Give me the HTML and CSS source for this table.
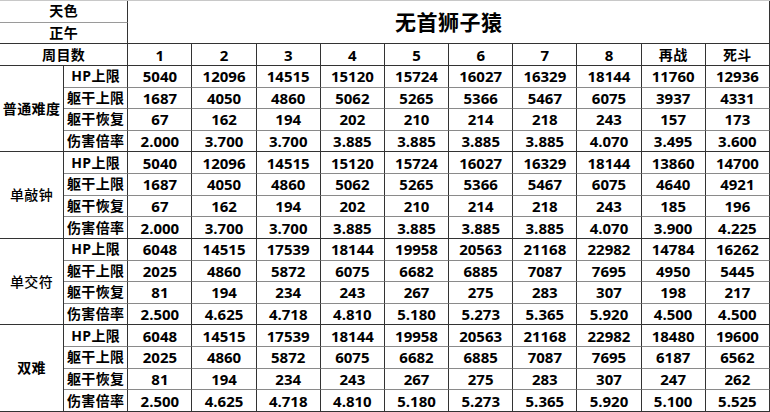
FILE: index.html
```html
<!DOCTYPE html>
<html lang="zh">
<head>
<meta charset="utf-8">
<link rel="stylesheet" href="styles.css">
</head>
<body>
<table class="sheet">
<colgroup>
<col><col><col><col><col><col><col><col><col><col><col><col>
</colgroup>
<tbody>
<tr class="g2"><td colspan="2" class="lbl">天色</td><td colspan="10" rowspan="2" class="title">无首狮子猿</td></tr>
<tr><td colspan="2" class="lbl">正午</td></tr>
<tr><td colspan="2" class="lbl">周目数</td><td>1</td><td>2</td><td>3</td><td>4</td><td>5</td><td>6</td><td>7</td><td>8</td><td class="lbl">再战</td><td class="lbl">死斗</td></tr>

<tr class="g"><td rowspan="4" class="grp">普通难度</td><td class="lbl">HP上限</td><td>5040</td><td>12096</td><td>14515</td><td>15120</td><td>15724</td><td>16027</td><td>16329</td><td>18144</td><td>11760</td><td>12936</td></tr>
<tr class="g"><td class="lbl">躯干上限</td><td>1687</td><td>4050</td><td>4860</td><td>5062</td><td>5265</td><td>5366</td><td>5467</td><td>6075</td><td>3937</td><td>4331</td></tr>
<tr class="g"><td class="lbl">躯干恢复</td><td>67</td><td>162</td><td>194</td><td>202</td><td>210</td><td>214</td><td>218</td><td>243</td><td>157</td><td>173</td></tr>
<tr><td class="lbl">伤害倍率</td><td>2.000</td><td>3.700</td><td>3.700</td><td>3.885</td><td>3.885</td><td>3.885</td><td>3.885</td><td>4.070</td><td>3.495</td><td>3.600</td></tr>

<tr class="g"><td rowspan="4" class="grp light">单敲钟</td><td class="lbl">HP上限</td><td>5040</td><td>12096</td><td>14515</td><td>15120</td><td>15724</td><td>16027</td><td>16329</td><td>18144</td><td>13860</td><td>14700</td></tr>
<tr class="g"><td class="lbl">躯干上限</td><td>1687</td><td>4050</td><td>4860</td><td>5062</td><td>5265</td><td>5366</td><td>5467</td><td>6075</td><td>4640</td><td>4921</td></tr>
<tr class="g"><td class="lbl">躯干恢复</td><td>67</td><td>162</td><td>194</td><td>202</td><td>210</td><td>214</td><td>218</td><td>243</td><td>185</td><td>196</td></tr>
<tr><td class="lbl">伤害倍率</td><td>2.000</td><td>3.700</td><td>3.700</td><td>3.885</td><td>3.885</td><td>3.885</td><td>3.885</td><td>4.070</td><td>3.900</td><td>4.225</td></tr>

<tr class="g"><td rowspan="4" class="grp light">单交符</td><td class="lbl">HP上限</td><td>6048</td><td>14515</td><td>17539</td><td>18144</td><td>19958</td><td>20563</td><td>21168</td><td>22982</td><td>14784</td><td>16262</td></tr>
<tr class="g"><td class="lbl">躯干上限</td><td>2025</td><td>4860</td><td>5872</td><td>6075</td><td>6682</td><td>6885</td><td>7087</td><td>7695</td><td>4950</td><td>5445</td></tr>
<tr class="g"><td class="lbl">躯干恢复</td><td>81</td><td>194</td><td>234</td><td>243</td><td>267</td><td>275</td><td>283</td><td>307</td><td>198</td><td>217</td></tr>
<tr><td class="lbl">伤害倍率</td><td>2.500</td><td>4.625</td><td>4.718</td><td>4.810</td><td>5.180</td><td>5.273</td><td>5.365</td><td>5.920</td><td>4.500</td><td>4.500</td></tr>

<tr class="g"><td rowspan="4" class="grp">双难</td><td class="lbl">HP上限</td><td>6048</td><td>14515</td><td>17539</td><td>18144</td><td>19958</td><td>20563</td><td>21168</td><td>22982</td><td>18480</td><td>19600</td></tr>
<tr class="g"><td class="lbl">躯干上限</td><td>2025</td><td>4860</td><td>5872</td><td>6075</td><td>6682</td><td>6885</td><td>7087</td><td>7695</td><td>6187</td><td>6562</td></tr>
<tr class="g"><td class="lbl">躯干恢复</td><td>81</td><td>194</td><td>234</td><td>243</td><td>267</td><td>275</td><td>283</td><td>307</td><td>247</td><td>262</td></tr>
<tr><td class="lbl">伤害倍率</td><td>2.500</td><td>4.625</td><td>4.718</td><td>4.810</td><td>5.180</td><td>5.273</td><td>5.365</td><td>5.920</td><td>5.100</td><td>5.525</td></tr>
</tbody>
</table>
</body>
</html>
```
FILE: styles.css
```css
html, body {
  margin: 0;
  padding: 0;
  background: #ffffff;
}

.sheet {
  width: 770px;
  table-layout: fixed;
  border-collapse: separate;
  border-spacing: 0;
  border-top: 1px solid #c8c8c8;
  font-family: "Open Sans", "Noto Sans CJK SC", "Microsoft YaHei", sans-serif;
  font-size: 15px;
  font-weight: 700;
  color: #000;
}

.sheet col {
  width: 64.17px;
}

.sheet tr {
  height: 21.63px;
}

.sheet td {
  padding: 0;
  text-align: center;
  vertical-align: middle;
  line-height: 16px;
  border-right: 1px solid #333;
  border-bottom: 1px solid #333;
  white-space: nowrap;
  overflow: hidden;
}

.sheet td.lbl,
.sheet td.grp {
  font-size: 14px;
  letter-spacing: 0.4px;
}

.sheet tr.g td {
  border-bottom-color: #8a8a8a;
}

.sheet tr.g2 td {
  border-bottom: 1px solid #9a9a9a;
}

.sheet tr.g td.grp,
.sheet tr.g2 td.title {
  border-bottom-color: #333;
}

.sheet td.title {
  font-size: 21px;
  letter-spacing: 0.5px;
}

.grp.light {
  font-weight: 500;
}
```
